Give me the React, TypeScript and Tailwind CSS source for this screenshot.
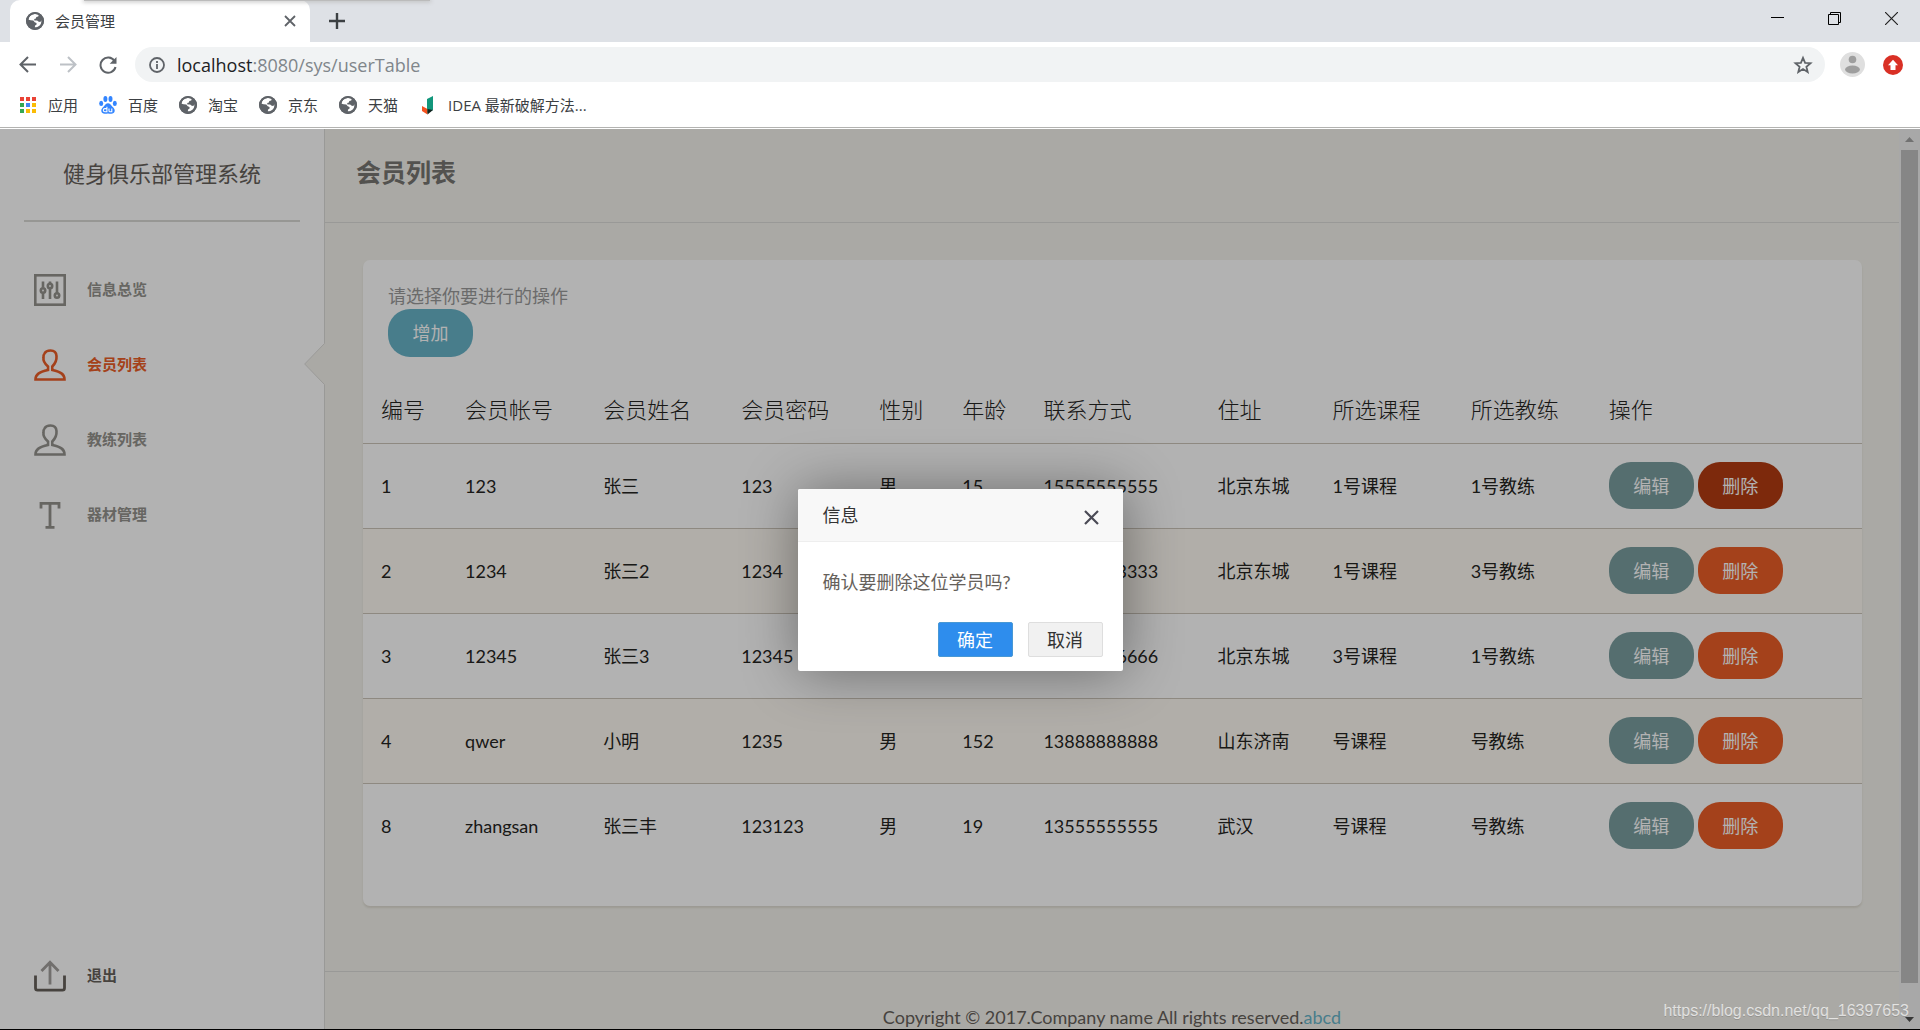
import { useState } from "react";
import type { ReactNode } from "react";

interface Member {
  id: number;
  account: string;
  name: string;
  password: string;
  sex: string;
  age: number;
  phone: string;
  address: string;
  course: string;
  coach: string;
}

const members: Member[] = [
  { id: 1, account: "123", name: "张三", password: "123", sex: "男", age: 15, phone: "15555555555", address: "北京东城", course: "1号课程", coach: "1号教练" },
  { id: 2, account: "1234", name: "张三2", password: "1234", sex: "男", age: 15, phone: "13333333333", address: "北京东城", course: "1号课程", coach: "3号教练" },
  { id: 3, account: "12345", name: "张三3", password: "12345", sex: "男", age: 16, phone: "16666666666", address: "北京东城", course: "3号课程", coach: "1号教练" },
  { id: 4, account: "qwer", name: "小明", password: "1235", sex: "男", age: 152, phone: "13888888888", address: "山东济南", course: "号课程", coach: "号教练" },
  { id: 8, account: "zhangsan", name: "张三丰", password: "123123", sex: "男", age: 19, phone: "13555555555", address: "武汉", course: "号课程", coach: "号教练" },
];

const columns = [
  { title: "编号", width: "w-[84px]" },
  { title: "会员帐号", width: "w-[138px]" },
  { title: "会员姓名", width: "w-[138px]" },
  { title: "会员密码", width: "w-[138px]" },
  { title: "性别", width: "w-[83px]" },
  { title: "年龄", width: "w-[81px]" },
  { title: "联系方式", width: "w-[174px]" },
  { title: "住址", width: "w-[115px]" },
  { title: "所选课程", width: "w-[138px]" },
  { title: "所选教练", width: "w-[138px]" },
  { title: "操作", width: "w-[271px]" },
];

const GlobeIcon = () => (
  <svg viewBox="0 0 18 18" className="size-[18px] shrink-0">
    <circle cx="9" cy="9" r="9" fill="#5f6368" />
    <path d="M8.2 2.1c1.7-.3 3.2 0 4.5.8l-.5 1.5-1.9.5-.4 1.6-1.7.5.2 1.5h2.7l1.6 1.3 1.7.1.9-1.7c.4 2.3-.5 4.6-2.3 5.9-1.2.9-2.7 1.4-4.2 1.2l.3-1.7 1.5-1-.1-1.6-1.8-.8-1.4-1.7-2.6-.3-2.2-.5c.3-2.9 2.5-5.2 5.7-5.6z" fill="#fff" />
    <circle cx="9" cy="9" r="8" fill="none" stroke="#5f6368" strokeWidth="2" />
  </svg>
);

const AppsIcon = () => {
  const colors = ["#ea4335", "#ea4335", "#ea4335", "#34a853", "#4285f4", "#fbbc05", "#34a853", "#fbbc05", "#fbbc05"];
  return (
    <svg viewBox="0 0 18 18" className="size-[18px] shrink-0">
      {colors.map((c, i) => (
        <rect key={i} x={1 + (i % 3) * 6} y={1 + Math.floor(i / 3) * 6} width="4" height="4" fill={c} />
      ))}
    </svg>
  );
};

const PawIcon = () => (
  <svg viewBox="0 0 18 18" className="size-[18px] shrink-0" fill="#3385ff">
    <ellipse cx="6.4" cy="3" rx="2" ry="2.9" />
    <ellipse cx="11.5" cy="3" rx="2" ry="2.9" />
    <ellipse cx="2.2" cy="7.4" rx="2" ry="2.6" />
    <ellipse cx="15.8" cy="7.4" rx="2" ry="2.6" />
    <path d="M9 7.2c2 0 2.8 1.8 4.2 3.2 1.6 1.5 2.8 2.6 2.5 4.7-.3 2-1.8 2.8-3.7 2.7-1.1 0-1.9-.3-3-.3s-1.9.3-3 .3c-1.9.1-3.4-.7-3.7-2.7-.3-2.1.9-3.2 2.5-4.700C6.2 9 7 7.2 9 7.2z" />
    <path d="M7.9 10.8v5H5.9a1.5 1.5 0 010-3.2h2M10 12.5v2.200c0 .8.4 1.100 1.100 1.100h1.700v-3.300" fill="none" stroke="#fff" strokeWidth="1.1" />
  </svg>
);

const IdeaIcon = () => (
  <svg viewBox="0 0 18 20" className="h-5 w-[18px] shrink-0">
    <path d="M8 4l6-3v14l-6 3z" fill="#12977c" />
    <path d="M3 11l5.500 3v5.500L3 16z" fill="#f4511e" />
    <path d="M8.500 14l5.500 1-5.500 4.500z" fill="#10241f" />
  </svg>
);

const ControlsIcon = () => (
  <svg viewBox="0 0 32 32" className="size-8" fill="none" stroke="currentColor" strokeWidth="2.6">
    <rect x="1.3" y="1.3" width="29.4" height="29.4" strokeWidth="2.6" />
    <path d="M9 7.500v6M9 19v6M16 7.500v1.500M16 14v11M23 7.500V19" />
    <circle cx="9" cy="16.500" r="2.200" />
    <circle cx="16" cy="12" r="2.200" />
    <circle cx="23" cy="21.500" r="2.200" />
  </svg>
);

const UserIcon = () => (
  <svg viewBox="0 0 32 32" className="size-8" fill="none" stroke="currentColor" strokeWidth="2.6">
    <path d="M1.5 30.500c0-5 3.500-7.500 12.500-9.500v-3.500C10.500 14.500 9 11.500 9.500 8.500c-.2-2 .1-3 1-4C11.500 2.500 13.500 1.500 16.500 1.500c3.500 0 5.800 1.700 6 5.500.3 4-1.200 7.500-4.200 10.500V21c9 2 12.200 4.500 12.200 9.500z" />
  </svg>
);

const TextIcon = () => (
  <svg viewBox="0 0 32 32" className="size-8" fill="none" stroke="currentColor" strokeWidth="2.8">
    <path d="M7 9.500V4.300h18v5.200M16 4.300v24M11.500 28.300h9" />
  </svg>
);

const ExportIcon = () => (
  <svg viewBox="0 0 32 32" className="size-8" fill="none" stroke="currentColor" strokeWidth="2.8">
    <path d="M1.500 15.500V28c0 1.500.8 2.200 2 2.200h25c1.200 0 2-.7 2-2.200V15.500" />
    <path d="M16 24.500V2M7.500 11L16 2.200 24.500 11" className="opacity-60" />
  </svg>
);

const NavItem = (props: { title: string; icon: ReactNode; active?: boolean; exit?: boolean }) => {
  const { title, icon, active, exit } = props;
  const color = active ? "text-[#eb5e28]" : exit ? "text-[#66615b]" : "text-[#94928d]";
  return (
    <a href="#" className={`relative flex h-[75px] items-center pl-[34px] text-[15px] font-bold ${color}`}>
      {icon}
      <span className="ml-[21px]">{title}</span>
      {active && (
        <svg viewBox="0 0 21 42" className="absolute top-4 -right-px h-[42px] w-[21px]">
          <path d="M21 0L1 21l20 21z" fill="#f4f3ed" />
          <path d="M20.500 .5L.7 21l19.800 20.500" fill="none" stroke="#dcdbd8" />
        </svg>
      )}
    </a>
  );
};

const Bookmark = (props: { title: string; icon: ReactNode }) => (
  <a href="#" className="flex items-center gap-[11px]">
    {props.icon}
    <span>{props.title}</span>
  </a>
);

const Browser = () => (
  <header className="shrink-0 bg-white font-['Open_Sans','Noto_Sans_CJK_SC',sans-serif] text-[#3c4043]">
    <div className="relative flex h-[42px] items-end bg-[#dee1e6] pl-2.5">
      <div className="flex h-[42px] w-[300px] items-center rounded-t-[10px] bg-white pr-3.5 pl-4 text-[15px]">
        <GlobeIcon />
        <span className="ml-[11px] flex-1">会员管理</span>
        <button aria-label="关闭标签页">
          <svg viewBox="0 0 12 12" className="size-3" stroke="#5f6368" strokeWidth="1.8">
            <path d="M1 1l10 10M11 1L1 11" />
          </svg>
        </button>
      </div>
      <div className="absolute top-0 left-[84px] h-px w-[346px] bg-[#bbb] shadow-[0_0_4px_1px_#bbb]" />
      <button aria-label="新标签页" className="mb-[13px] ml-[19px]">
        <svg viewBox="0 0 16 16" className="size-4" stroke="#3c4043" strokeWidth="2.4">
          <path d="M8 0v16M0 8h16" />
        </svg>
      </button>
      <div className="mr-[22px] ml-auto flex h-full items-center gap-11 pb-1.5">
        <button aria-label="最小化">
          <svg viewBox="0 0 13 13" className="size-[13px]" stroke="#000"><path d="M0 5.500h13" /></svg>
        </button>
        <button aria-label="还原">
          <svg viewBox="0 0 13 13" className="size-[13px]" fill="none" stroke="#000">
            <path d="M.5 2.500h10v10H.5zM2.500 2V.5h10v10H11" />
          </svg>
        </button>
        <button aria-label="关闭">
          <svg viewBox="0 0 13 13" className="size-[13px]" stroke="#222" strokeWidth="1.2"><path d="M0 0l13 13M13 0L0 13" /></svg>
        </button>
      </div>
    </div>
    <div className="flex h-[43px] items-center pt-0.5 pr-[17px] pl-[19px]">
      <button aria-label="后退">
        <svg viewBox="0 0 17 17" className="size-[17px]" fill="none" stroke="#5f6368" strokeWidth="2">
          <path d="M17 8.500H1.500M9 1L1.500 8.500 9 16" />
        </svg>
      </button>
      <button aria-label="前进" className="ml-6">
        <svg viewBox="0 0 17 17" className="size-[17px]" fill="none" stroke="#bdc1c6" strokeWidth="2">
          <path d="M0 8.500h15.500M8 1l7.500 7.500L8 16" />
        </svg>
      </button>
      <button aria-label="刷新" className="ml-[22px]">
        <svg viewBox="0 0 18 18" className="size-[18px]" fill="none" stroke="#5f6368" strokeWidth="2">
          <path d="M15.500 5A7.600 7.600 0 1016.500 11" />
          <path d="M17.500 1v6.800h-6.800z" fill="#5f6368" stroke="none" />
        </svg>
      </button>
      <div className="ml-[18px] flex h-[35px] flex-1 items-center rounded-full bg-[#f1f3f4] pr-3 pl-3.5">
        <svg viewBox="0 0 16 16" className="size-4" fill="none" stroke="#5f6368" strokeWidth="1.8">
          <circle cx="8" cy="8" r="7" />
          <path d="M8 7v5M8 4v2" />
        </svg>
        <a href="#" className="ml-3 flex-1 text-lg text-[#80868b]">
          <span className="text-[#202124]">localhost</span>:8080/sys/userTable
        </a>
        <button aria-label="收藏">
          <svg viewBox="0 0 20 20" className="size-5" fill="none" stroke="#5f6368" strokeWidth="1.8">
            <path d="M10 2.800l2.100 5 5.400.4-4.100 3.500 1.300 5.300-4.700-2.900L5.300 17l1.300-5.300-4.100-3.500 5.400-.4z" />
          </svg>
        </button>
      </div>
      <button aria-label="用户" className="ml-[15px]">
        <svg viewBox="0 0 25 25" className="size-[25px]">
          <circle cx="12.500" cy="12.500" r="12.500" fill="#dfdfdf" />
          <circle cx="12.500" cy="7.500" r="3.800" fill="#9e9e9e" />
          <ellipse cx="12.500" cy="17.500" rx="7.400" ry="4" fill="#9e9e9e" />
        </svg>
      </button>
      <button aria-label="更新" className="ml-[18px]">
        <svg viewBox="0 0 20 20" className="size-5">
          <circle cx="10" cy="10" r="10" fill="#d93025" />
          <path d="M10 4.800l5 5.500h-2.500V15h-5v-4.700H5z" fill="#fff" />
        </svg>
      </button>
    </div>
    <nav className="flex h-[42px] items-center gap-[21px] pb-0.5 pl-[19px] text-[15px]">
      <Bookmark title="应用" icon={<AppsIcon />} />
      <Bookmark title="百度" icon={<PawIcon />} />
      <Bookmark title="淘宝" icon={<GlobeIcon />} />
      <Bookmark title="京东" icon={<GlobeIcon />} />
      <Bookmark title="天猫" icon={<GlobeIcon />} />
      <Bookmark title="IDEA 最新破解方法..." icon={<IdeaIcon />} />
    </nav>
    <div className="h-0.5 border-t border-[#b3b3b1]" />
  </header>
);

const Sidebar = () => (
  <aside className="flex w-[325px] shrink-0 flex-col border-r border-[#dcdbd8] bg-white">
    <div className="mx-6 flex h-[93px] items-center justify-center border-b-2 border-[#d8d8d4] text-[22px] text-[#66615b]">
      健身俱乐部管理系统
    </div>
    <nav className="mt-[30px]">
      <NavItem title="信息总览" icon={<ControlsIcon />} />
      <NavItem title="会员列表" icon={<UserIcon />} active />
      <NavItem title="教练列表" icon={<UserIcon />} />
      <NavItem title="器材管理" icon={<TextIcon />} />
    </nav>
    <div className="mt-auto mb-4">
      <NavItem title="退出" icon={<ExportIcon />} exit />
    </div>
  </aside>
);

const MemberRow = (props: { member: Member; pressed: boolean; onDelete: () => void }) => {
  const { member, pressed, onDelete } = props;
  return (
    <tr className="h-[85px] border-t border-[#ccc5b9] even:bg-[#fefaf2]">
      <td className="pl-[18px]">{member.id}</td>
      <td className="pl-[18px]">{member.account}</td>
      <td className="pl-[18px]">{member.name}</td>
      <td className="pl-[18px]">{member.password}</td>
      <td className="pl-[18px]">{member.sex}</td>
      <td className="pl-[18px]">{member.age}</td>
      <td className="pl-[18px]">{member.phone}</td>
      <td className="pl-[18px]">{member.address}</td>
      <td className="pl-[18px]">{member.course}</td>
      <td className="pl-[18px]">{member.coach}</td>
      <td className="pl-[18px]">
        <div className="flex gap-1">
          <button className="h-[47px] w-[85px] rounded-[22px] bg-[#7a9e9f] text-white">编辑</button>
          <button
            className={`h-[47px] w-[85px] rounded-[22px] text-white ${pressed ? "bg-[#b33c12]" : "bg-[#eb5e28]"}`}
            onClick={onDelete}
          >
            删除
          </button>
        </div>
      </td>
    </tr>
  );
};

const ConfirmModal = (props: { onClose: () => void }) => (
  <div role="dialog" aria-label="信息" className="w-[325px] rounded-xs bg-white shadow-[1px_1px_55px_rgba(0,0,0,0.4)]">
    <div className="flex h-[53px] items-center justify-between rounded-t-xs border-b border-[#eee] bg-[#f8f8f8] pr-6 pl-[25px] text-[#333]">
      <h2>信息</h2>
      <button aria-label="关闭" className="pt-1" onClick={props.onClose}>
        <svg viewBox="0 0 15 15" className="size-[15px]" stroke="#4a4a55" strokeWidth="2.2">
          <path d="M1 1l13 13M14 1L1 14" />
        </svg>
      </button>
    </div>
    <p className="px-[25px] pt-[26px] pb-[26px] leading-7 text-[#66615b]">确认要删除这位学员吗?</p>
    <div className="flex justify-end gap-[15px] pr-5 pb-[14px]">
      <button className="h-[35px] w-[75px] rounded-xs border border-[#4898d5] bg-[#2e8ded] text-white" onClick={props.onClose}>
        确定
      </button>
      <button className="h-[35px] w-[75px] rounded-xs border border-[#dedede] bg-[#f1f1f1] text-[#333]" onClick={props.onClose}>
        取消
      </button>
    </div>
  </div>
);

const ScrollBar = () => (
  <div className="flex w-[21px] shrink-0 flex-col items-center bg-[#f1f1f1]">
    <svg viewBox="0 0 9 5" className="my-2 h-[5px] w-[9px]"><path d="M0 5l4.500-5L9 5z" fill="#a3a3a3" /></svg>
    <div className="w-[17px] flex-1 bg-[#c1c1c1]" />
    <svg viewBox="0 0 9 5" className="mt-[34px] mb-[7px] h-[5px] w-[9px]"><path d="M0 0l4.500 5L9 0z" fill="#505050" /></svg>
  </div>
);

export default function App() {
  const [deleting, setDeleting] = useState<number | null>(1);

  return (
    <div className="flex h-screen flex-col border-b border-black bg-white">
      <Browser />
      <div className="relative flex min-h-0 flex-1 font-[Lato,'Noto_Sans_CJK_SC',sans-serif] text-lg">
        <Sidebar />
        <div className="flex min-w-0 flex-1 flex-col overflow-hidden bg-[#f4f3ed]">
          <div className="flex h-[94px] shrink-0 items-center border-b border-[#dcdbd8] pb-1.5 pl-[31px]">
            <h1 className="text-[25px] font-bold text-[#777672]">会员列表</h1>
          </div>
          <main className="pt-[37px] pr-[37px] pb-[65px] pl-[38px]">
            <section className="rounded-[7px] bg-white pb-[38px] shadow-[0_2px_2px_rgba(204,197,185,0.5)]">
              <div className="px-[25px] pt-[23px]">
                <p className="leading-[26px] text-[#9a9a9a]">请选择你要进行的操作</p>
                <button className="h-12 w-[85px] rounded-[22px] bg-[#68b3c8] text-white">增加</button>
              </div>
              <table className="mt-5 w-full table-fixed text-left text-[#252422]">
                <thead>
                  <tr className="h-[66px] text-[22px]">
                    {columns.map((col) => (
                      <th key={col.title} className={`pl-[18px] font-light ${col.width}`}>{col.title}</th>
                    ))}
                  </tr>
                </thead>
                <tbody>
                  {members.map((m) => (
                    <MemberRow key={m.id} member={m} pressed={m.id === deleting} onDelete={() => setDeleting(m.id)} />
                  ))}
                </tbody>
              </table>
            </section>
          </main>
          <footer className="border-t border-[#dcdbd8] pt-[31px] text-center text-[#66615b]">
            Copyright © 2017.Company name All rights reserved.
            <a href="#" className="text-[#68b3c8]">abcd</a>
          </footer>
        </div>
        <ScrollBar />
        {deleting !== null && (
          <div className="absolute inset-0 flex items-center justify-center bg-black/30 pt-0.5">
            <ConfirmModal onClose={() => setDeleting(null)} />
          </div>
        )}
        <span className="absolute right-[11px] bottom-1.5 font-['Liberation_Sans',sans-serif] text-base text-white/70 text-shadow-2xs">
          https://blog.csdn.net/qq_16397653
        </span>
      </div>
    </div>
  );
}
